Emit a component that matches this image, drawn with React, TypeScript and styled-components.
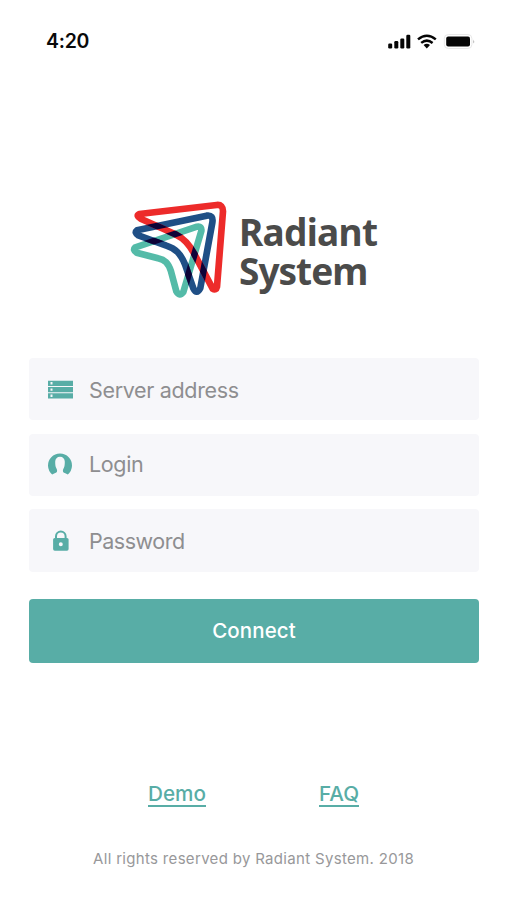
import React from "react";
import styled, { createGlobalStyle } from "styled-components";

const teal = "#58ada6";
const overlap = "#0d0338";

const GlobalStyle = createGlobalStyle`
  * { box-sizing: border-box; }
  html, body { margin: 0; background: #fff; }
  body { font-family: Inter, "Liberation Sans", sans-serif; }
`;

const Screen = styled.main`
  width: 507px;
  height: 900px;
  display: flex;
  flex-direction: column;
  background: #fff;
  overflow: hidden;
`;

const StatusBar = styled.header`
  height: 82px;
  padding: 0 32px 0 46px;
  display: flex;
  align-items: center;
  justify-content: space-between;
`;

const Clock = styled.time`
  font-size: 19.5px;
  font-weight: 600;
  line-height: 24px;
  letter-spacing: -0.25px;
  color: #0a0a0a;
`;

const StatusIcons = styled.svg`
  width: 88px;
  height: 20px;
  display: block;
`;

const Brand = styled.div`
  height: 120px;
  margin: 108px 0 0 120px;
  display: flex;
  align-items: flex-start;
`;

const Mark = styled.svg`
  width: 119px;
  height: 120px;
  flex: none;
`;

const BrandName = styled.h1`
  margin: 22px 0 0;
  font-family: "Noto Sans", "Open Sans", sans-serif;
  font-size: 37px;
  font-weight: 700;
  line-height: 39px;
  color: #4b4b4a;
`;

const BrandLine = styled.span<{ $spacing: number }>`
  display: block;
  letter-spacing: ${(p) => p.$spacing}px;
`;

const Form = styled.form`
  width: 450px;
  margin: 48px 0 0 29px;
  display: flex;
  flex-direction: column;
`;

const Field = styled.label<{ $height: number; $gap: number }>`
  height: ${(p) => p.$height}px;
  margin-bottom: ${(p) => p.$gap}px;
  padding-left: 18px;
  display: flex;
  align-items: center;
  border-radius: 4px;
  background: #f7f7fa;
`;

const FieldIcon = styled.svg`
  width: 27px;
  height: 27px;
  margin-right: 15px;
  flex: none;
  fill: ${teal};
`;

const Input = styled.input<{ $spacing: number; $top?: number }>`
  flex: 1;
  min-width: 0;
  height: 34px;
  padding: ${(p) => p.$top ?? 1}px 0 ${(p) => 2 - (p.$top ?? 1)}px;
  border: 0;
  outline: 0;
  background: transparent;
  font: 400 21.5px/32px Inter, "Liberation Sans", sans-serif;
  letter-spacing: ${(p) => p.$spacing}px;
  color: #4b4b4a;
  &::placeholder { color: #8e8e90; opacity: 1; }
`;

const Connect = styled.button`
  height: 64px;
  padding: 0;
  border: 0;
  border-radius: 4px;
  background: ${teal};
  color: #fff;
  font: 500 20.5px/24px Inter, "Liberation Sans", sans-serif;
  letter-spacing: 0.08px;
`;

const Links = styled.nav`
  margin: 120px 0 0 148px;
  display: flex;
  gap: 113px;
`;

const Link = styled.a`
  height: 24px;
  border-bottom: 2px solid ${teal};
  color: ${teal};
  font-size: 20.7px;
  font-weight: 500;
  line-height: 21px;
  text-decoration: none;
`;

const Copyright = styled.footer`
  margin-top: 42px;
  text-align: center;
  font-size: 15px;
  line-height: 20px;
  letter-spacing: 0.32px;
  color: #98989a;
`;

const red = "M58 72 L290 45 Q309 43 309 64 L291 290 Q288 303 278 296 L222 190 C207 164 194 147 166 133 L62 86 Q47 77 58 72Z";
const blue = "M51 121 L260 77 Q281 74 277 98 L241 294 Q230 316 220 295 L195 223 C181 190 167 176 139 167 L55 136 Q42 128 51 121Z";
const green = "M46 172 L231 110 Q246 107 244 123 L190 306 Q179 321 169 304 L153 244 C145 218 134 209 114 205 L50 188 Q37 180 46 172Z";

function Logo() {
  return (
    <Mark viewBox="0 0 357 360" fill="none" strokeWidth="20" strokeLinejoin="round" aria-hidden="true">
      <defs>
        <mask id="onRed" maskUnits="userSpaceOnUse" x="0" y="0" width="360" height="360">
          <path d={red} stroke="#fff" />
        </mask>
        <mask id="onBlue" maskUnits="userSpaceOnUse" x="0" y="0" width="360" height="360">
          <path d={blue} stroke="#fff" />
        </mask>
      </defs>
      <path d={green} stroke="#54bba8" />
      <path d={blue} stroke="#1f4f86" />
      <path d={red} stroke="#ed2b2a" />
      <path d={blue} stroke={overlap} mask="url(#onRed)" />
      <path d={green} stroke={overlap} mask="url(#onRed)" />
      <path d={green} stroke={overlap} mask="url(#onBlue)" />
    </Mark>
  );
}

function Status() {
  return (
    <StatusIcons viewBox="0 0 88 20" aria-hidden="true">
      <g fill="#050505">
        <rect x="1.2" y="12.5" width="4" height="5" rx="1.2" />
        <rect x="7.3" y="10" width="4" height="7.5" rx="1.2" />
        <rect x="13.3" y="7.5" width="4" height="10" rx="1.2" />
        <rect x="19.3" y="3.8" width="4" height="13.7" rx="1.2" />
        <path d="M36.6 14 Q39.8 11.7 43 14 L39.8 17.6Z" />
        <rect x="59.2" y="5.5" width="23.8" height="10" rx="2" />
      </g>
      <g fill="none" stroke="#050505" strokeWidth="2.5">
        <path d="M31 8.4 Q39.8 1 48.8 8.4" />
        <path d="M34.2 11.9 Q39.8 7.4 45.6 11.9" />
      </g>
      <rect x="57.3" y="3.5" width="27.6" height="14" rx="4" fill="none" stroke="#e8e8e8" strokeWidth="1" />
      <path d="M86.3 8.4 Q88 10.4 86.3 12.4Z" fill="#aaa" />
    </StatusIcons>
  );
}

export default function App() {
  return (
    <>
      <GlobalStyle />
      <Screen>
        <StatusBar>
          <Clock>4:20</Clock>
          <Status />
        </StatusBar>
        <Brand>
          <Logo />
          <BrandName>
            <BrandLine $spacing={-0.7}>Radiant</BrandLine>
            <BrandLine $spacing={-1}>System</BrandLine>
          </BrandName>
        </Brand>
        <Form onSubmit={(e) => e.preventDefault()}>
          <Field $height={62} $gap={14}>
            <FieldIcon viewBox="0 0 27 27">
              <path fillRule="evenodd" d="M1 4.7H26V10H1Z M3.5 6H5.5V8.4H3.5Z M1 11H26V16.2H1Z M3.5 12.4H5.5V14.8H3.5Z M1 17.2H26V22.5H1Z M3.5 18.6H5.5V21H3.5Z" />
            </FieldIcon>
            <Input aria-label="Server address" placeholder="Server address" $spacing={-0.33} $top={2} />
          </Field>
          <Field $height={62} $gap={13}>
            <FieldIcon viewBox="0 0.5 27 27">
              <path d="M5.2 23.1A12 12 0 1 1 20.8 23.1L17.8 21.6C16.6 21 16 20.4 15.9 19.4C15.8 18.4 16.3 17.6 16.8 16.6C17.6 14.9 17.8 12.6 17.8 10.2C17.8 7.2 15.9 5.2 13 5.2S8.2 7.2 8.2 10.2C8.2 12.6 8.4 14.9 9.2 16.6C9.7 17.6 10.2 18.4 10.1 19.4C10 20.4 9.4 21 8.2 21.6Z" />
            </FieldIcon>
            <Input aria-label="Login" placeholder="Login" $spacing={-0.35} $top={0} />
          </Field>
          <Field $height={63} $gap={27}>
            <FieldIcon viewBox="0 -1 27 27">
              <path fillRule="evenodd" d="M8 10V8.3A5.8 5.8 0 0 1 19.6 8.3V10H20Q21.6 10 21.6 11.6V21Q21.6 22.8 20 22.8H7.8Q6.1 22.8 6.1 21V11.6Q6.1 10 7.8 10Z M10 10H17.6V8.3A3.8 3.8 0 0 0 10 8.3Z M13.8 14.2A2 2 0 1 0 13.8 18.2A2 2 0 1 0 13.8 14.2Z" />
            </FieldIcon>
            <Input type="password" aria-label="Password" placeholder="Password" $spacing={-0.48} />
          </Field>
          <Connect type="submit">Connect</Connect>
        </Form>
        <Links>
          <Link href="#demo">Demo</Link>
          <Link href="#faq">FAQ</Link>
        </Links>
        <Copyright>All rights reserved by Radiant System. 2018</Copyright>
      </Screen>
    </>
  );
}
